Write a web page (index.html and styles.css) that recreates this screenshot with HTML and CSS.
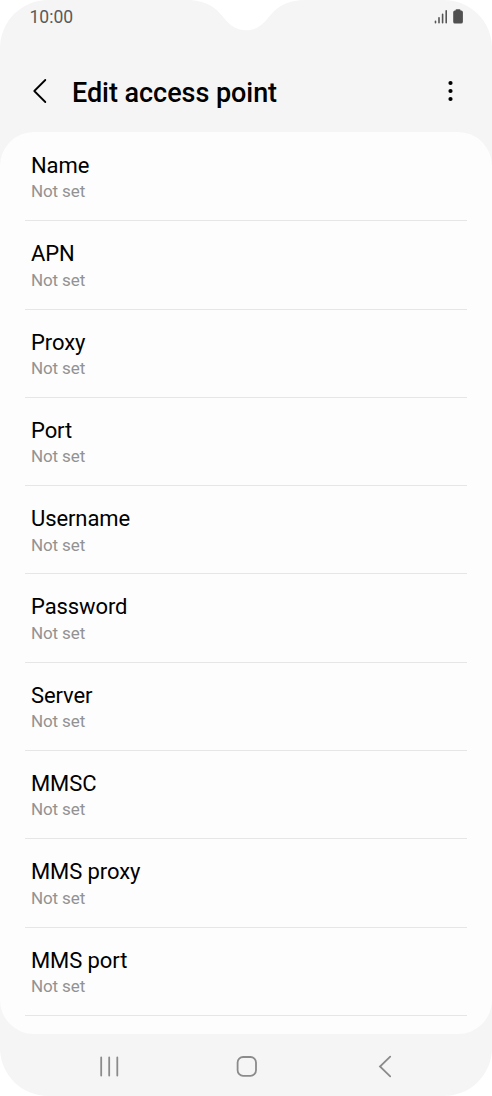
FILE: index.html
```html
<!DOCTYPE html>
<html lang="en">
<head>
<meta charset="utf-8">
<title>Edit access point</title>
<link rel="stylesheet" href="styles.css">
</head>
<body>
<main class="phone">
  <svg class="notch" viewBox="0 0 130 31" aria-hidden="true"><path d="M10 0C28 1 37 9 44 18C50 26 58 30.300 66 30.300C75 30.300 82 26 88 18C95 9 104 1 122 0Z"/></svg>
  <div class="status">
    <span class="clock">10:00</span>
    <svg class="indicators" width="30" height="16" viewBox="0 0 30 16" aria-hidden="true">
      <path class="signal" d="M1.500 12.300v1.400M5 8.800v4.900M8.600 5.300v8.400M12.200 1.800v11.900"/>
      <path class="battery" d="M21.500 1.500Q21.500 .2 22.500 .2H25.500Q26.500 .2 26.500 1.500H27.200Q28.900 1.500 28.900 3.200V12.700Q28.900 14.600 27 14.600H21Q19.200 14.600 19.200 12.700V3.200Q19.200 1.500 20.900 1.500Z"/>
    </svg>
  </div>
  <header class="header">
    <svg class="back" width="14" height="26" viewBox="0 0 14 26" aria-hidden="true"><path d="M12.300 2L1.300 13L12.300 24"/></svg>
    <h1 class="title">Edit access point</h1>
    <svg class="more" width="6" height="22" viewBox="0 0 6 22" aria-hidden="true"><circle cx="3.500" cy="3" r="2.100"/><circle cx="3.500" cy="11" r="2.100"/><circle cx="3.500" cy="19" r="2.100"/></svg>
  </header>
  <section class="card">
    <div class="row"><span class="label">Name</span><span class="value">Not set</span></div>
    <div class="row"><span class="label">APN</span><span class="value">Not set</span></div>
    <div class="row"><span class="label">Proxy</span><span class="value">Not set</span></div>
    <div class="row"><span class="label">Port</span><span class="value">Not set</span></div>
    <div class="row"><span class="label">Username</span><span class="value">Not set</span></div>
    <div class="row"><span class="label">Password</span><span class="value">Not set</span></div>
    <div class="row"><span class="label">Server</span><span class="value">Not set</span></div>
    <div class="row"><span class="label">MMSC</span><span class="value">Not set</span></div>
    <div class="row"><span class="label">MMS proxy</span><span class="value">Not set</span></div>
    <div class="row"><span class="label">MMS port</span><span class="value">Not set</span></div>
  </section>
  <nav class="navbar">
    <svg width="22" height="24" viewBox="0 0 22 24" aria-hidden="true"><path d="M3.200 3.500v18M11.200 3.500v18M19.300 3.500v18"/></svg>
    <svg width="22" height="24" viewBox="0 0 22 24" aria-hidden="true"><rect x="1.600" y="3" width="18.400" height="18.800" rx="5.500"/></svg>
    <svg width="22" height="24" viewBox="0 0 22 24" aria-hidden="true"><path d="M16.200 2.700L6 12.500L16.200 22.300"/></svg>
  </nav>
</main>
</body>
</html>
```
FILE: styles.css
```css
* {
  box-sizing: border-box;
}

body {
  margin: 0;
  background: #fff;
  font-family: Roboto, "Liberation Sans", sans-serif;
}

.phone {
  position: relative;
  display: flex;
  flex-direction: column;
  width: 492px;
  height: 1096px;
  overflow: hidden;
  background: #f5f5f5;
  border-radius: 48px;
}

.notch {
  position: absolute;
  top: 0;
  left: 180px;
  width: 130px;
  height: 31px;
  fill: #fff;
}

.status {
  display: flex;
  justify-content: space-between;
  height: 50px;
  padding: 7px 28px 0 29.500px;
}

.clock {
  font-size: 17.500px;
  line-height: 20px;
  color: #5a5a5a;
}

.indicators {
  margin-top: 2px;
}

.signal {
  fill: none;
  stroke: #555;
  stroke-width: 1.600;
  stroke-linecap: round;
}

.battery {
  fill: #505050;
}

.header {
  display: flex;
  align-items: center;
  height: 82px;
  padding: 0 39px 0 33px;
}

.back {
  fill: none;
  stroke: #000;
  stroke-width: 1.800;
  stroke-linecap: round;
  stroke-linejoin: round;
}

.title {
  margin: 4px auto 0 25px;
  font-size: 27px;
  font-weight: 500;
  line-height: 32px;
  letter-spacing: -0.050px;
  color: #000;
}

.more {
  fill: #000;
}

.card {
  height: 902px;
  padding: 1px 25px 0;
  overflow: hidden;
  background: #fdfdfd;
  border-radius: 34px;
}

.row {
  display: flex;
  flex-direction: column;
  height: 88.300px;
  padding: 19px 6px 0;
  border-bottom: 1.500px solid #e6e6e6;
}

.label {
  font-size: 22px;
  line-height: 28px;
  letter-spacing: -0.100px;
  color: #000;
}

.value {
  font-size: 17px;
  line-height: 22px;
  letter-spacing: -0.120px;
  margin-top: 0.400px;
  color: #929292;
}

.navbar {
  display: flex;
  justify-content: space-between;
  padding: 20px 96px 0 98px;
}

.navbar svg {
  fill: none;
  stroke: #8b8b8b;
  stroke-width: 1.800;
  stroke-linecap: round;
}
```
